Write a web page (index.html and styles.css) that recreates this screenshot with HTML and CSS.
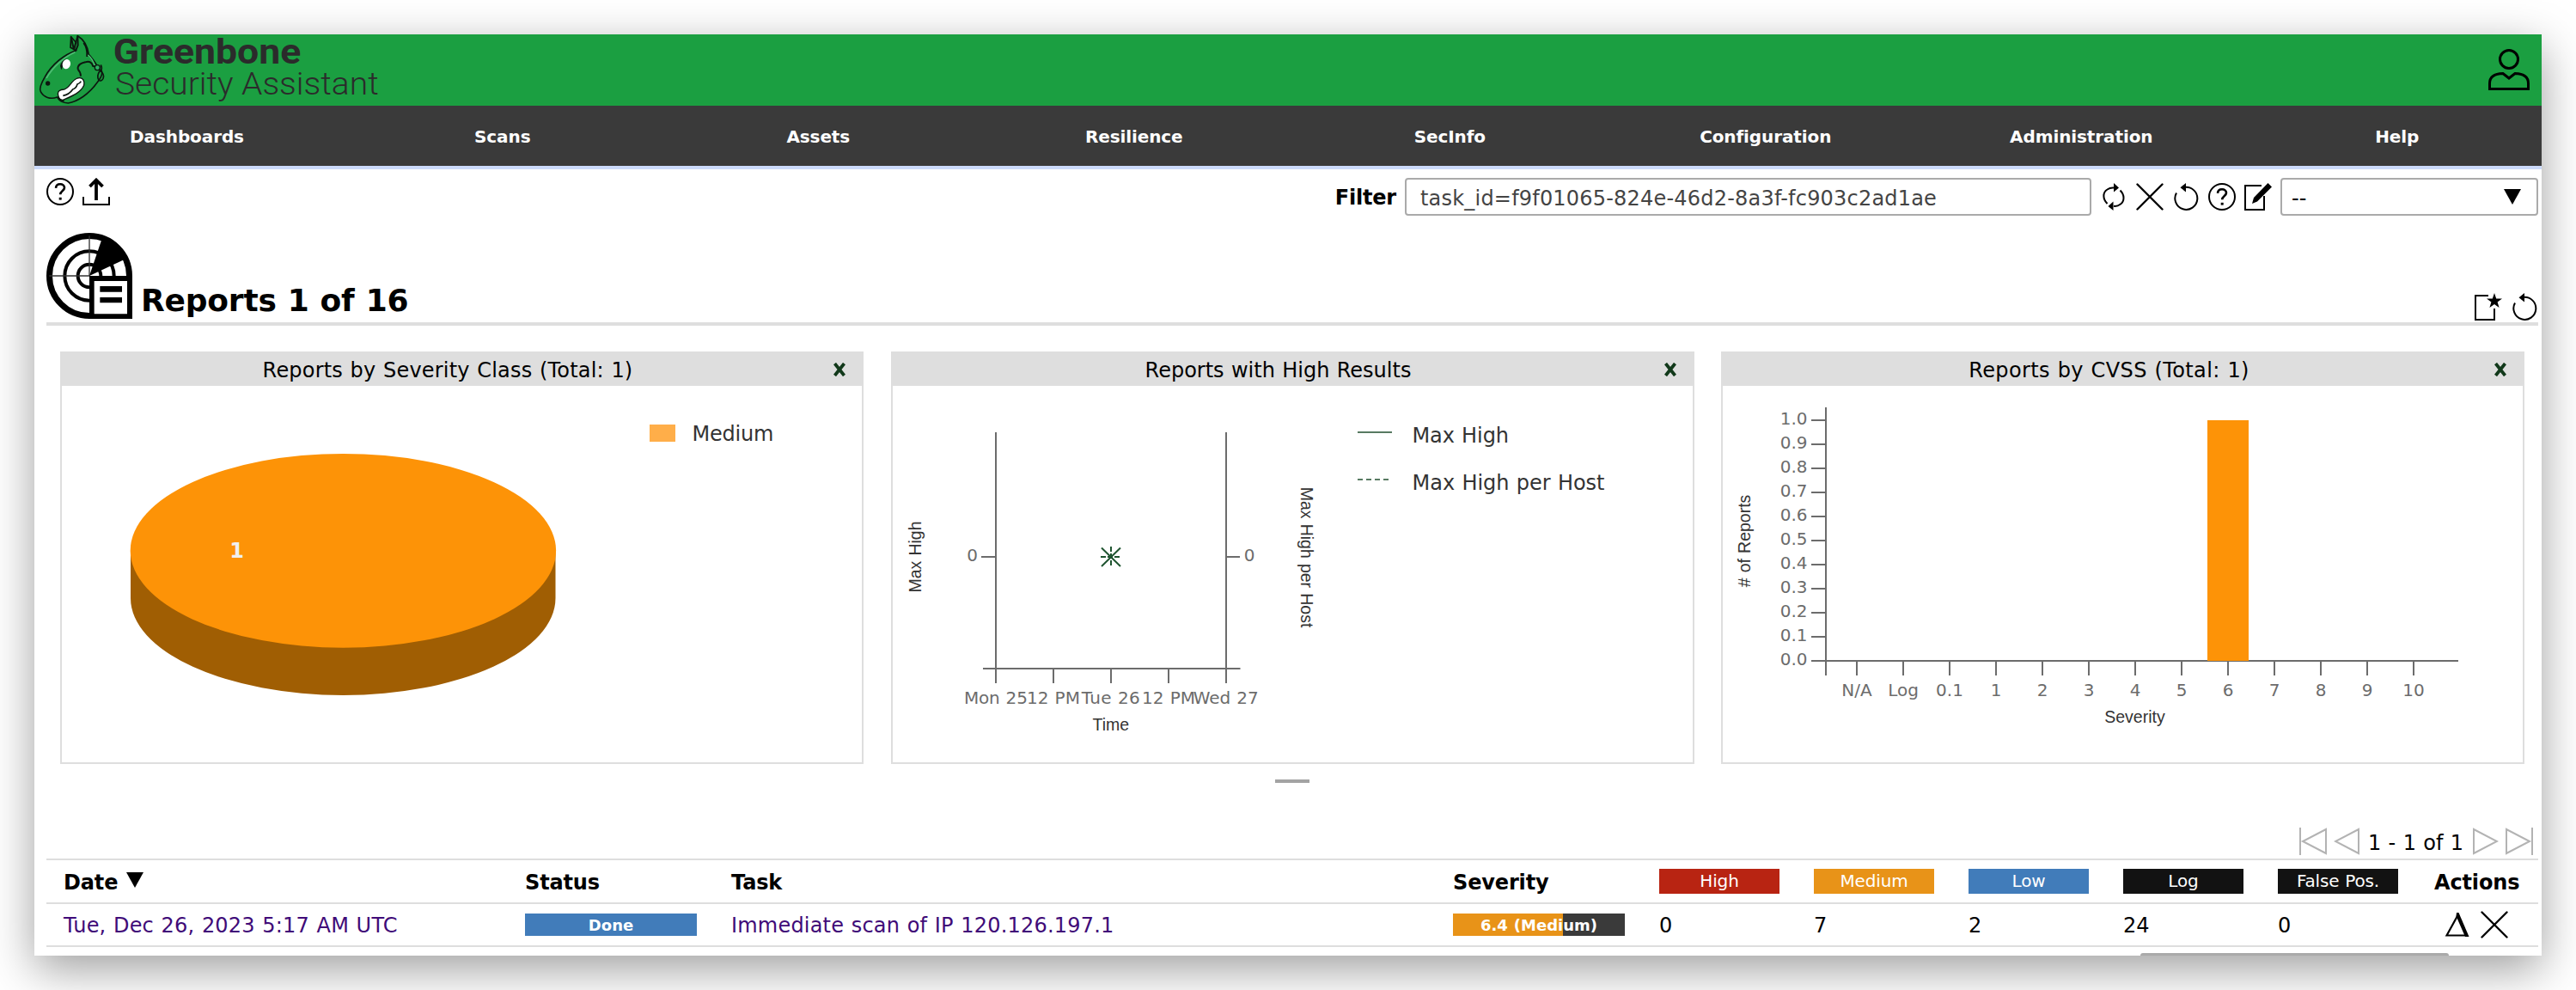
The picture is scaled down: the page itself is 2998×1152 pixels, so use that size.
FILE: index.html
```html
<!DOCTYPE html>
<html lang="en">
<head>
<meta charset="utf-8">
<title>Greenbone Security Assistant</title>
<link rel="stylesheet" href="styles.css">
</head>
<body>
<svg class="defs" aria-hidden="true">
  <symbol id="help" viewBox="0 0 32 32"><circle cx="16" cy="16" r="15" fill="none" stroke="#000" stroke-width="2"/><path d="M11 11.8C11.200 8.800 13.200 7.300 16 7.300s5 1.700 5 4.300c0 3.200-4.800 3.600-4.800 7.600" fill="none" stroke="#000" stroke-width="2.600"/><rect x="14.700" y="22.800" width="3" height="2.800"/></symbol>
  <symbol id="reset" viewBox="0 0 32 32"><path d="M5 11.500A13 13 0 1 0 14.500 5" fill="none" stroke="#000" stroke-width="2"/><path d="M9.500 5.200L16 0v10.500z"/></symbol>
  <symbol id="cross" viewBox="0 0 32 32"><path d="M1.500 1.500l29 29M30.500 1.500l-29 29" fill="none" stroke="#000" stroke-width="2.400" stroke-linecap="round"/></symbol>
</svg>
<div class="window">
  <header class="header">
    <svg class="logo" viewBox="0 12 1260 249" width="420" height="83">
      <path d="M146 68C105 82 62 115 37 160C24 182 16 202 22 212C32 232 56 240 80 231C89 245 97 251 118 252C150 247 190 222 221 178C243 150 238 134 226 136C216 112 205 100 190 82C185 50 170 28 151 17L145 40L128 20L126 58Z" fill="#1b9c41" stroke="#0c170f" stroke-width="5" stroke-linejoin="round"/>
      <path d="M128 20L138 66L145 40M151 17L152 50L144 70M172 42Q186 60 184 90" fill="none" stroke="#0c170f" stroke-width="6"/>
      <path d="M142 74C105 90 65 125 42 165" fill="none" stroke="#4fbd74" stroke-width="5"/>
      <path d="M187 84Q203 96 210 120" fill="none" stroke="#4fbd74" stroke-width="4"/>
      <path d="M90 122Q96 102 112 97L94 136Z" fill="#0c170f"/>
      <ellipse cx="112" cy="116" rx="14" ry="17" transform="rotate(18 112 116)" fill="#fff"/>
      <path d="M152 134C150 116 166 112 178 109C194 104 202 112 204 122L230 130M152 134Q161 142 162 158" fill="none" stroke="#0c170f" stroke-width="6"/>
      <circle cx="220" cy="128" r="9" fill="#2fb364" stroke="#0c170f" stroke-width="4"/>
      <path d="M232 118Q239 134 230 140Q246 150 240 166Q234 178 225 172Q216 158 228 140" fill="none" stroke="#0c170f" stroke-width="5"/>
      <path d="M84 228C78 210 90 204 104 204C124 198 128 174 150 165C170 160 176 174 173 190C162 216 130 228 100 241Q88 242 84 228Z" fill="#fff" stroke="#0c170f" stroke-width="4"/>
      <path d="M100 226Q122 222 134 204Q146 200 150 186Q158 184 163 176" fill="none" stroke="#0c170f" stroke-width="5"/>
      <ellipse cx="47" cy="183" rx="8" ry="8" fill="#0c170f"/>
      <path d="M80 231Q90 243 104 244" fill="none" stroke="#0c170f" stroke-width="5"/>
      <text class="brand" x="275" y="114" textLength="656" lengthAdjust="spacingAndGlyphs">Greenbone</text>
      <text class="product" x="282" y="222" textLength="920" lengthAdjust="spacingAndGlyphs">Security Assistant</text>
    </svg>
    <svg class="user" viewBox="0 0 48 48" width="48" height="48"><ellipse cx="24" cy="12" rx="10.500" ry="10.500" fill="none" stroke="#000" stroke-width="3"/><path d="M1.500 46.500V40Q1.500 29 17 28.500L24 34L31 28.500Q46.500 29 46.500 40V46.500Z" fill="none" stroke="#000" stroke-width="3"/></svg>
  </header>
  <nav class="nav"><a>Dashboards</a><a>Scans</a><a>Assets</a><a>Resilience</a><a>SecInfo</a><a>Configuration</a><a>Administration</a><a>Help</a></nav>

  <main class="content">
    <div class="toolbar">
      <div class="icons">
        <svg width="32" height="32"><use href="#help"/></svg>
        <svg width="32" height="32" viewBox="0 0 32 32"><path d="M1 22v9h30v-9" fill="none" stroke="#000" stroke-width="2"/><path d="M16 26V3M8.500 10L16 2.500L23.500 10" fill="none" stroke="#000" stroke-width="3.800"/></svg>
      </div>
      <div class="filter">
        <label class="filter-label">Filter</label>
        <div class="field">task_id=f9f01065-824e-46d2-8a3f-fc903c2ad1ae</div>
        <div class="icons">
          <svg width="32" height="32" viewBox="0 0 32 32"><path d="M8.500 24C3 18.500 3 11 8.500 7.500Q12 5 16 5.500M23.500 8.500C29 14 28.500 21 24 24.500Q20 27.500 16 26.800" fill="none" stroke="#000" stroke-width="2"/><path d="M16 0l6 5.500l-6 5zM15.500 21.500v10.500L9.500 27z"/></svg>
          <svg width="32" height="32"><use href="#cross"/></svg>
          <svg width="32" height="32"><use href="#reset"/></svg>
          <svg width="32" height="32"><use href="#help"/></svg>
          <svg width="32" height="32" viewBox="0 0 32 32"><path d="M20 3H1v28h22V15" fill="none" stroke="#000" stroke-width="2"/><path d="M27.500 0L32 4.500L15 21.500L9 24L11 17z"/></svg>
        </div>
        <div class="select"><span>--</span><svg width="20" height="18"><path d="M0 0h20L10 18z"/></svg></div>
      </div>
    </div>

    <div class="section-head">
      <svg width="100" height="100" viewBox="0 0 300 300">
        <g fill="none" stroke="#000"><circle cx="150" cy="150" r="139.500" stroke-width="21"/><circle cx="150" cy="150" r="86" stroke-width="12"/><circle cx="150" cy="150" r="40" stroke-width="12"/><path d="M150 10V150M10 150H150" stroke-width="4" stroke="#333"/></g>
        <path d="M150 150L194 20Q250 40 280 89Z"/>
        <path d="M150 150h150v150H150z"/><path d="M167 168h115v115H167z" fill="#fff"/><path d="M187 186h77v20h-77zM187 225h77v19h-77z"/>
      </svg>
      <h1>Reports 1 of 16</h1>
      <div class="icons">
        <svg width="32" height="32" viewBox="0 0 32 32"><path d="M16 3H1v28h22V18" fill="none" stroke="#000" stroke-width="2"/><path d="M23 0l2.200 6.400h6.800l-5.400 4.100l2 6.500L23 13l-5.600 4l2-6.500L14 6.400h6.800z"/></svg>
        <svg width="32" height="32"><use href="#reset"/></svg>
      </div>
    </div>

    <div class="dashboard">
      <section class="panel">
        <div class="panel-head"><span class="wide">Reports by Severity Class (Total: 1)</span><svg width="16" height="16"><path d="M2.500 1l11 14M13.500 1l-11 14"/></svg></div>
        <svg class="chart" viewBox="72 449 931 438" width="931" height="438">
          <path d="M152 641V696A247.250 112.900 0 0 0 646.500 696V641Z" fill="#a05e03"/>
          <ellipse cx="399.400" cy="640.800" rx="247.700" ry="112.900" fill="#fd9307"/>
          <text class="slice" x="275.500" y="649">1</text>
          <rect x="756" y="494" width="30" height="20" fill="#ffae49"/>
          <text class="legend" x="805.500" y="513" textLength="95">Medium</text>
        </svg>
      </section>
      <section class="panel">
        <div class="panel-head"><span>Reports with High Results</span><svg width="16" height="16"><path d="M2.500 1l11 14M13.500 1l-11 14"/></svg></div>
        <svg class="chart" viewBox="1039 449 931 438" width="931" height="438">
          <path class="axis" d="M1159 503V795M1427 503V795M1144 778H1443.500M1226 778v17M1293 778v17M1360 778v17M1142 648h17M1427 648h16"/>
          <g class="tick">
            <text x="1131.500" y="653">0</text><text x="1454" y="653">0</text>
            <text x="1158.900" y="819" textLength="74">Mon 25</text><text x="1225.900" y="819" textLength="62">12 PM</text><text x="1292.800" y="819" textLength="68">Tue 26</text><text x="1360" y="819" textLength="62">12 PM</text><text x="1426.700" y="819" textLength="76">Wed 27</text>
          </g>
          <text class="title" x="1292.800" y="850">Time</text>
          <text class="title" transform="translate(1071.500 648) rotate(-90)">Max High</text>
          <text class="title" transform="translate(1514 648.500) rotate(90)">Max High per Host</text>
          <g class="marker"><path d="M1282 637.500L1304 659M1304 637.500L1282 659"/><path d="M1281 648h23.500M1293 636v24" stroke-dasharray="6 2"/></g>
          <path d="M1580 503h40" class="key"/><path d="M1580 558h38" class="key" stroke-dasharray="6 4"/>
          <text class="legend" x="1643.500" y="515" textLength="112.500">Max High</text>
          <text class="legend" x="1643.500" y="570" textLength="224">Max High per Host</text>
        </svg>
      </section>
      <section class="panel">
        <div class="panel-head"><span class="wider">Reports by CVSS (Total: 1)</span><svg width="16" height="16"><path d="M2.500 1l11 14M13.500 1l-11 14"/></svg></div>
        <svg class="chart" viewBox="2005 449 931 438" width="931" height="438">
          <path class="axis" d="M2125 474V786M2108 769H2861M2108 489h17M2108 517h17M2108 545h17M2108 573h17M2108 601h17M2108 629h17M2108 657h17M2108 685h17M2108 713h17M2108 741h17M2161 769v17M2215 769v17M2269 769v17M2323 769v17M2377 769v17M2431 769v17M2485 769v17M2539 769v17M2593 769v17M2647 769v17M2701 769v17M2755 769v17M2809 769v17"/>
          <rect x="2569" y="489" width="48" height="280" fill="#fd9307"/>
          <g class="tick end">
            <text x="2103.500" y="494">1.0</text><text x="2103.500" y="522">0.9</text><text x="2103.500" y="550">0.8</text><text x="2103.500" y="578">0.7</text><text x="2103.500" y="606">0.6</text><text x="2103.500" y="634">0.5</text><text x="2103.500" y="662">0.4</text><text x="2103.500" y="690">0.3</text><text x="2103.500" y="718">0.2</text><text x="2103.500" y="746">0.1</text><text x="2103.500" y="774">0.0</text>
          </g>
          <g class="tick">
            <text x="2161" y="810">N/A</text><text x="2215" y="810">Log</text><text x="2269" y="810">0.1</text><text x="2323" y="810">1</text><text x="2377" y="810">2</text><text x="2431" y="810">3</text><text x="2485" y="810">4</text><text x="2539" y="810">5</text><text x="2593" y="810">6</text><text x="2647" y="810">7</text><text x="2701" y="810">8</text><text x="2755" y="810">9</text><text x="2809" y="810">10</text>
          </g>
          <text class="title" x="2484.500" y="841">Severity</text>
          <text class="title" transform="translate(2037 629.500) rotate(-90)">#&#160;of Reports</text>
        </svg>
      </section>
    </div>
    <div class="handle"></div>

    <div class="pagination">
      <svg width="32" height="32" viewBox="0 0 32 32"><path d="M1 0v32M31 2v28L4 16z"/></svg>
      <svg width="32" height="32" viewBox="0 0 32 32"><path d="M29 2v28L2 16z"/></svg>
      <span>1 - 1 of 1</span>
      <svg width="32" height="32" viewBox="0 0 32 32"><path d="M3 2v28L30 16z"/></svg>
      <svg width="32" height="32" viewBox="0 0 32 32"><path d="M31 0v32M1 2v28L28 16z"/></svg>
    </div>

    <div class="table">
      <div class="row head">
        <div class="sort">Date <svg width="20" height="18"><path d="M0 0h20L10 18z"/></svg></div><div>Status</div><div>Task</div><div>Severity</div>
        <div><span class="badge high">High</span></div><div><span class="badge medium">Medium</span></div><div><span class="badge low">Low</span></div><div><span class="badge log">Log</span></div><div><span class="badge log">False Pos.</span></div>
        <div class="actions-head">Actions</div>
      </div>
      <div class="row">
        <div><a class="date">Tue, Dec 26, 2023 5:17 AM UTC</a></div>
        <div><span class="bar done">Done</span></div>
        <div><a class="task">Immediate scan of IP 120.126.197.1</a></div>
        <div><span class="bar score">6.4 (Medium)</span></div>
        <div>0</div><div>7</div><div>2</div><div>24</div><div>0</div>
        <div class="actions">
          <svg width="32" height="32" viewBox="0 0 32 32"><path d="M2.500 28.500L15.500 5L26 28.500z" fill="none" stroke="#000" stroke-width="2.200"/><path d="M14 2h2.500L28.500 30h-4.500L13.500 6z"/></svg>
          <svg width="32" height="32"><use href="#cross"/></svg>
        </div>
      </div>
    </div>
  </main>
  <div class="scrollbar"></div>
</div>
</body>
</html>
```
FILE: styles.css
```css
* { box-sizing: border-box; }
html, body { margin: 0; height: 1152px; overflow: hidden; }
body {
  background: #fff;
  padding: 40px;
  font: 24px/30px Verdana, "DejaVu Sans", sans-serif;
  word-spacing: .03em;
  color: #000;
}
svg { display: block; flex: none; }
.defs { display: none; }
.window {
  position: relative;
  width: 2918px;
  height: 1072px;
  overflow: hidden;
  background: #fff;
  box-shadow: 0 16px 50px rgba(0, 0, 0, .38);
}
.header {
  height: 83px;
  background: #1b9f41;
  display: flex;
  justify-content: space-between;
  padding-right: 14px;
}
.logo { overflow: visible; }
.user { margin-top: 17px; }
.brand { font: bold 122px Roboto, sans-serif; fill: #2b2b2b; word-spacing: 0; }
.product { font: 300 108px Roboto, sans-serif; fill: #2b2b2b; word-spacing: 0; }
.nav {
  height: 74px;
  background: #3a3a3a;
  border-bottom: 4px solid #cbdafa;
  display: flex;
  align-items: center;
}
.nav a {
  flex: 0 0 367.5px;
  padding-top: 2px;
  text-align: center;
  color: #fff;
  font-size: 20px;
  font-weight: bold;
  letter-spacing: -.1px;
}
.nav a:first-child { flex-basis: 361px; padding-right: 6px; }
.content { padding: 10px 4px 0 14px; }
.toolbar { display: flex; justify-content: space-between; height: 44px; }
.icons { display: flex; gap: 10px; }
.filter { display: flex; align-items: center; }
.filter-label { font-weight: bold; margin-right: 10px; padding-top: 2px; letter-spacing: -.2px; }
.field, .select {
  height: 44px;
  border: 2px solid #aaa;
  border-radius: 4px;
  display: flex;
  align-items: center;
}
.field { width: 799px; margin-right: 10px; padding: 3px 0 0 16px; color: #444; letter-spacing: .2px; }
.select { width: 300px; margin-left: 10px; padding: 3px 18px 0 11px; justify-content: space-between; }
.select svg { margin-top: -4px; }
.section-head {
  margin-top: 20px;
  height: 108px;
  border-bottom: 4px solid #dedede;
  display: flex;
}
h1 { margin: 57px auto 0 10px; font-size: 36px; line-height: 44px; letter-spacing: -.2px; }
.section-head .icons { margin-top: 70px; }
.dashboard { display: flex; gap: 31.500px; margin: 30px 15px 0 16px; }
.panel {
  flex: 0 0 935px;
  height: 480px;
  border: 2px solid #dedede;
  border-top: 0;
}
.panel-head {
  height: 40px;
  background: #dedede;
  display: flex;
  align-items: center;
  padding: 4px 18px 0 0;
}
.panel-head span { flex: 1; text-align: center; padding-left: 1px; }
.panel-head .wide { letter-spacing: .2px; }
.panel-head .wider { letter-spacing: .38px; padding-left: 2px; }
.panel-head svg { margin-bottom: 3px; }
.panel-head path { stroke: #11391a; stroke-width: 3.800; fill: none; }
.slice { font-weight: bold; fill: #f0f0f0; text-anchor: middle; }
.legend { fill: #333; }
.axis { stroke: #6c6c6c; stroke-width: 2; fill: none; }
.tick text { font-size: 20px; fill: #6c6c6c; text-anchor: middle; }
.tick.end text { text-anchor: end; }
.title { font: 19.500px "Liberation Sans", Arial, sans-serif; fill: #333; text-anchor: middle; }
.marker { stroke: #1f5430; stroke-width: 2; }
.key { stroke: #587a62; stroke-width: 2; }
.handle { width: 40px; height: 4px; background: #a3a3a3; margin: 18px 0 0 1430px; }
.pagination {
  margin: 52px 6px 4px 0;
  display: flex;
  gap: 8px;
  justify-content: flex-end;
  height: 32px;
  align-items: center;
}
.pagination svg path { fill: none; stroke: #b3b3b3; stroke-width: 2; }
.pagination span { width: 114px; white-space: nowrap; padding-top: 3px; }
.pagination span + svg { margin-left: -2px; }
.table { border-top: 2px solid #dedede; }
.row {
  display: grid;
  grid-template-columns: 537px 240px 840px 240px repeat(5, 180px) 143px;
  align-items: center;
  height: 50px;
  border-bottom: 2px solid #dedede;
}
.row > div { padding: 2px 0 0 20px; white-space: nowrap; }
.head { height: 51px; font-weight: bold; letter-spacing: -.15px; }
.sort { display: flex; align-items: center; gap: 10px; }
.sort svg { margin-top: -5px; }
.badge, .bar { display: block; color: #fff; text-align: center; margin-top: -2px; }
.badge { width: 140px; height: 29px; font-size: 20px; line-height: 28px; font-weight: normal; }
.bar { width: 200px; height: 26px; font-size: 18px; line-height: 27px; font-weight: bold; }
.high { background: #b82412; }
.medium { background: #e89318; }
.low, .done { background: #417cba; }
.log { background: #121212; }
.score { background: linear-gradient(90deg, #e89318 64%, #3a3a3a 64%); }
.row a { color: #400b78; letter-spacing: .2px; }
.row .actions-head { padding-left: 22px; }
.actions { display: flex; gap: 10px; }
.row .actions { padding: 0 0 0 34px; }
.scrollbar {
  position: absolute;
  left: 2451px;
  bottom: 0;
  width: 359px;
  height: 3px;
  background: #aaa;
  border-radius: 4px 4px 0 0;
}
```
